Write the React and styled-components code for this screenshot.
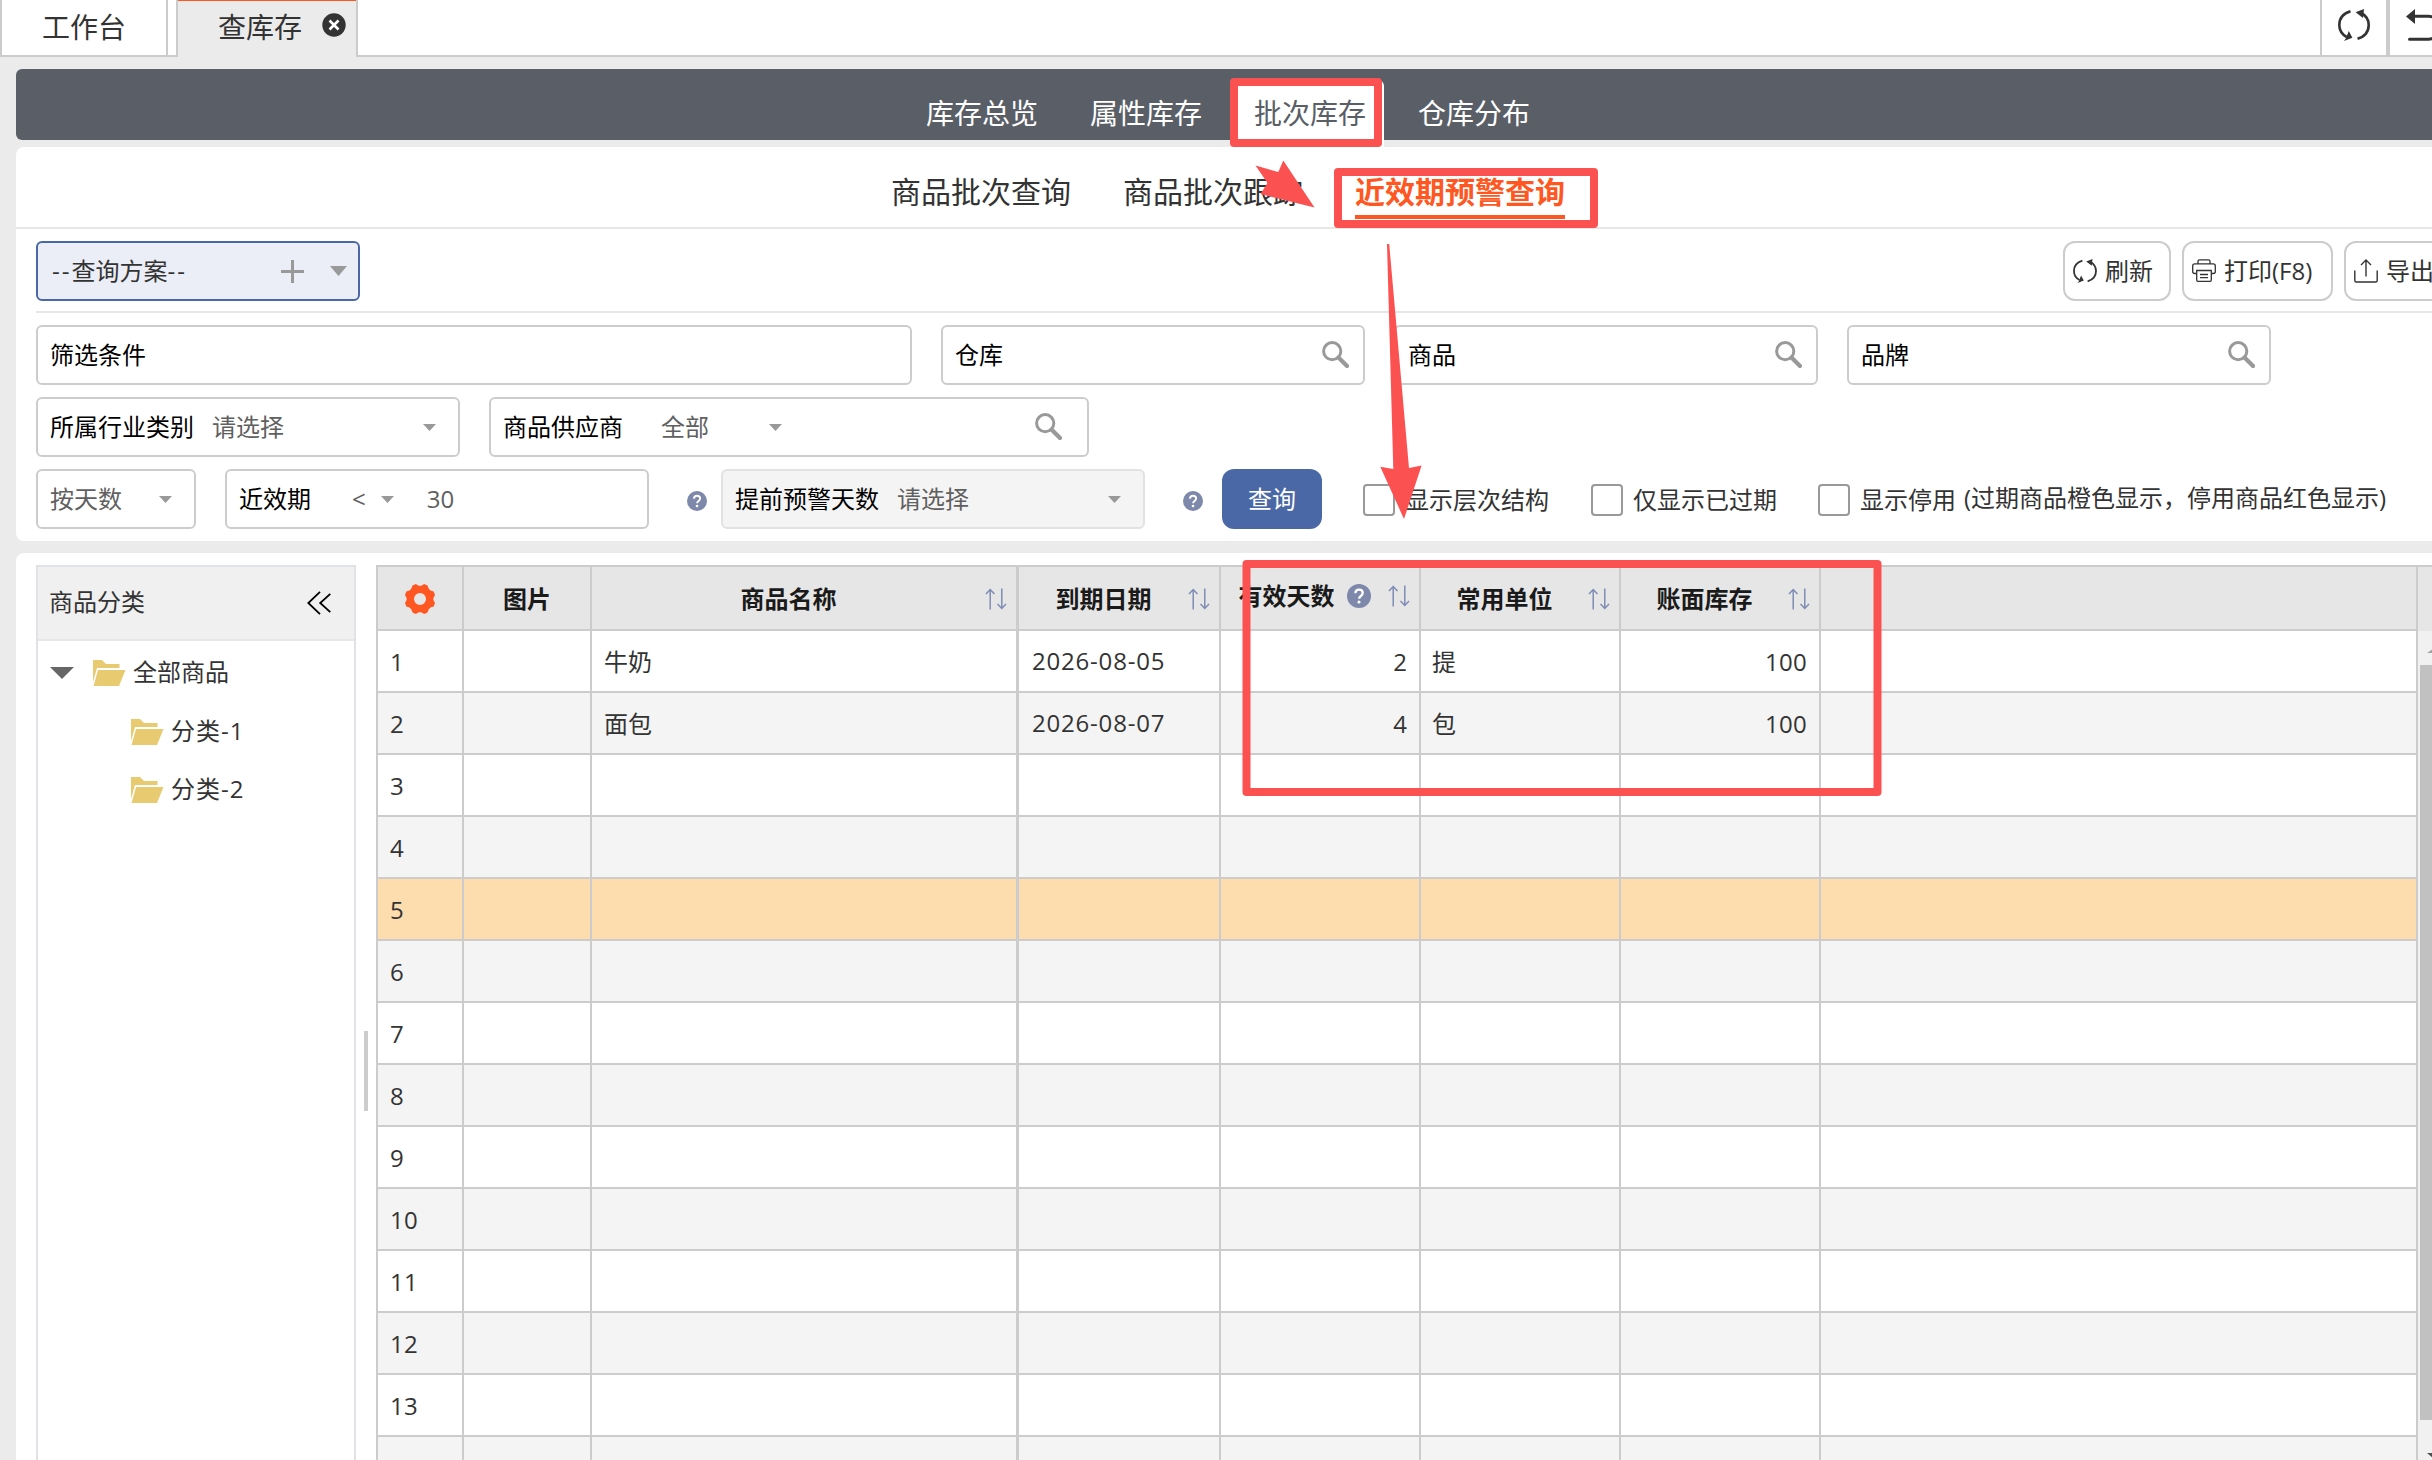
import React from "react";
import styled, { createGlobalStyle, css } from "styled-components";

const LINE = "#cccccc";
const ACCENT = "#ff5722";
const MARK = "#fb5151";

const GlobalStyle = createGlobalStyle`
  *, *::before, *::after { box-sizing: border-box; }
  html, body { margin: 0; padding: 0; }
  body {
    background: #ebebeb;
    color: #333;
    font-family: "Open Sans", "Noto Sans", "Noto Sans CJK SC", sans-serif;
    font-size: 24px;
    line-height: 36px;
    overflow: hidden;
  }
  svg { display: block; flex: none; }
`;

const Page = styled.div`
  position: relative;
  width: 2432px;
  height: 1460px;
  overflow: hidden;
  background: #ebebeb;
`;

/* ---------- window tabs ---------- */
const TabBar = styled.header`
  display: flex;
  height: 57px;
  background: #fff;
  box-shadow: inset 0 -2px 0 ${LINE};
`;

const WindowTab = styled.div`
  display: flex;
  align-items: center;
  width: ${(p) => p.$width}px;
  height: ${(p) => (p.$active ? 57 : 55)}px;
  margin-right: 8px;
  padding: 0 0 ${(p) => (p.$active ? 4 : 2)}px 40px;
  font-size: 28px;
  border: 0 solid ${LINE};
  border-width: 0 2px;
  ${(p) =>
    p.$active &&
    css`
      background: linear-gradient(${ACCENT}, ${ACCENT}) top / 100% 1px no-repeat #ebebeb;
    `}
`;

const CloseIcon = styled.svg`
  margin: 0 0 3px 20px;
`;

const TabTools = styled.div`
  display: flex;
  flex: none;
  height: 55px;
  margin-left: auto;
  margin-right: -24px;
`;

const TabTool = styled.div`
  width: 68px;
  padding: 9px 0 0 16px;
  border: 0 solid ${LINE};
  border-width: 0 2px;
`;

/* ---------- workspace ---------- */
const Workspace = styled.main`
  width: 2488px;
  padding-left: 16px;
`;

const MainNav = styled.nav`
  display: flex;
  align-items: flex-end;
  gap: 16px;
  height: 71px;
  margin-top: 12px;
  padding-left: 892px;
  border-radius: 6px;
  background: #5a5e66;
`;

const MainNavItem = styled.div`
  height: 60px;
  width: 148px;
  padding-top: 15px;
  text-align: center;
  font-size: 28px;
  color: ${(p) => (p.$active ? "#5a5e66" : "#fff")};
  background: ${(p) => (p.$active ? "#fff" : "transparent")};
  border-radius: 6px 6px 0 0;
  box-shadow: ${(p) => (p.$active ? "0 7px 0 #fff" : "none")};
`;

const Panel = styled.section`
  background: #fff;
  border-radius: 8px;
`;

const QueryPanel = styled(Panel)`
  height: 394px;
  margin-top: 7px;
`;

const SubNav = styled.nav`
  display: flex;
  gap: 52px;
  height: 82px;
  padding: 25px 0 0 875px;
  border-bottom: 2px solid #e6e6e6;
`;

const SubNavItem = styled.div`
  height: 47px;
  font-size: 30px;
  line-height: 40px;
  white-space: nowrap;
  ${(p) =>
    p.$active &&
    css`
      color: ${ACCENT};
      font-weight: 700;
      border-bottom: 4px solid ${ACCENT};
    `}
`;

const Toolbar = styled.div`
  display: flex;
  height: 84px;
  margin-left: 20px;
  padding: 12px 16px 0 0;
  border-bottom: 2px solid #e6e6e6;
`;

const SchemePicker = styled.div`
  display: flex;
  align-items: center;
  width: 324px;
  height: 60px;
  padding: 0 11px 0 14px;
  border: 2px solid #4a68a5;
  border-radius: 6px;
  background: #ebeef6;
`;

const SchemeName = styled.span`
  width: 229px;
`;

const Dash = styled.span`
  letter-spacing: 2px;
`;

const ToolButtons = styled.div`
  display: flex;
  gap: 11px;
  margin-left: auto;
`;

const ToolButton = styled.button`
  display: flex;
  align-items: center;
  gap: 8px;
  width: ${(p) => p.$width}px;
  height: 60px;
  padding: 0 0 0 8px;
  border: 2px solid ${LINE};
  border-radius: 12px;
  background: #fff;
  color: #333;
  font: inherit;
  white-space: nowrap;
`;

const Filters = styled.div`
  display: flex;
  flex-direction: column;
  gap: 12px;
  padding: 12px 0 0 20px;
`;

const FilterRow = styled.div`
  display: flex;
  align-items: center;
  height: 60px;
  gap: 29px;
`;

const Field = styled.div`
  display: flex;
  align-items: center;
  flex: none;
  width: ${(p) => p.$width}px;
  height: 60px;
  padding: 0 ${(p) => p.$end || 14}px 0 12px;
  border: 2px solid ${(p) => (p.$disabled ? "#e2e2e2" : LINE)};
  border-radius: 6px;
  background: ${(p) => (p.$disabled ? "#f4f4f4" : "#fff")};
`;

const Label = styled.span`
  color: #000;
  margin-right: ${(p) => p.$gap || 0}px;
`;

const Value = styled.span`
  color: #606060;
  margin-right: ${(p) => p.$gap || 0}px;
`;

const Push = styled.span`
  display: flex;
  margin-left: auto;
  padding-bottom: ${(p) => p.$lift || 0}px;
`;

const Hint = styled.div`
  display: flex;
  align-items: center;
  width: ${(p) => p.$width}px;
  padding: 4px 0 0 ${(p) => p.$pad}px;
`;

const RangeRow = styled(FilterRow)`
  gap: 0;
`;

const Spacer = styled.div`
  flex: none;
  width: ${(p) => p.$width}px;
`;

const QueryButton = styled.button`
  width: 100px;
  height: 60px;
  padding: 0;
  border: 0;
  border-radius: 12px;
  background: #4a68a5;
  color: #fff;
  font: inherit;
`;

const Check = styled.label`
  display: flex;
  align-items: center;
  gap: 10px;
  width: ${(p) => p.$width}px;
  margin-top: 2px;
  white-space: nowrap;
`;

const Box = styled.i`
  flex: none;
  width: 32px;
  height: 32px;
  border: 2px solid #999;
  border-radius: 4px;
  background: #fff;
`;

const Note = styled.span`
  margin-top: -3px;
  white-space: nowrap;
`;

/* ---------- results ---------- */
const ResultPanel = styled(Panel)`
  display: flex;
  height: 960px;
  margin-top: 12px;
  padding: 12px 0 0 20px;
`;

const Sidebar = styled.aside`
  flex: none;
  width: 320px;
  border: 2px solid #dfe2e6;
`;

const SidebarHead = styled.div`
  display: flex;
  align-items: center;
  justify-content: space-between;
  height: 74px;
  padding: 0 23px 0 12px;
  background: #f0f0f0;
  border-bottom: 2px solid #e6e6e6;
`;

const TreeRow = styled.div`
  display: flex;
  align-items: center;
  gap: 8px;
  height: 58.5px;
  margin-top: ${(p) => (p.$root ? 3 : 0)}px;
  padding-left: ${(p) => (p.$root ? 12 : 93)}px;
`;

const TreeLabel = styled.span`
  margin: -2px 0 0 -1px;
  letter-spacing: ${(p) => p.$spacing || 0}px;
`;

const TreeCaret = styled.svg`
  margin-right: 11px;
`;

const Splitter = styled.div`
  display: flex;
  flex: none;
  justify-content: center;
  width: 20px;
  padding-top: 466px;
`;

const SplitterHandle = styled.i`
  width: 4px;
  height: 80px;
  background: ${LINE};
`;

const Grid = styled.div`
  flex: none;
  width: 2042px;
  border-left: 2px solid ${LINE};
  border-top: 2px solid ${LINE};
`;

const GridRow = styled.div`
  display: grid;
  grid-template-columns: 86px 128px 427px 202px 200px 200px 200px 597px;
  height: ${(p) => (p.$head ? 64 : 62)}px;
  background: ${(p) => p.$bg};
`;

const Cell = styled.div`
  display: flex;
  align-items: center;
  justify-content: ${(p) => (p.$right ? "flex-end" : "flex-start")};
  padding: ${(p) => p.$drop || 0}px 12px 0 ${(p) => p.$start || 12}px;
  border-right: ${(p) => (p.$wide ? 3 : 2)}px solid ${LINE};
  border-bottom: 2px solid ${LINE};
  letter-spacing: ${(p) => p.$spacing || 0}px;
  white-space: nowrap;
  overflow: hidden;
`;

const HeadCell = styled.div`
  display: flex;
  align-items: center;
  padding: ${(p) => (p.$lift ? 0 : 2)}px ${(p) => (p.$sort ? 9 : 0)}px ${(p) => p.$lift || 0}px 0;
  border-right: ${(p) => (p.$wide ? 3 : 2)}px solid ${LINE};
  border-bottom: 2px solid ${LINE};
  color: #1a1a1a;
  font-weight: 700;
  white-space: nowrap;
`;

const HeadText = styled.span`
  display: flex;
  flex: 1;
  align-items: center;
  justify-content: center;
  gap: 12px;
`;

const ScrollTrack = styled.div`
  flex: none;
  width: 30px;
  border-top: 2px solid ${LINE};
  background: #f1f1f1;
`;

const ScrollHead = styled.div`
  height: 64px;
  background: #e6e6e6;
`;

const ScrollArrow = styled.svg`
  margin: ${(p) => p.$top}px 0 ${(p) => p.$bottom}px 9px;
`;

const ScrollThumb = styled.div`
  width: 30px;
  height: 755px;
  margin-left: 2px;
  background: #c1c1c1;
`;

/* ---------- annotations over the page ---------- */
const Annotations = styled.svg`
  position: absolute;
  left: 0;
  top: 0;
  pointer-events: none;
`;

/* ---------- icons ---------- */
const Refresh = ({ size, stroke }) => (
  <svg width={size} height={size} viewBox="0 0 32 32" fill="none">
    <path d="M12.5 2.2C5 4.5 1.3 10 1.3 16c0 5 3 9.6 7.4 12" stroke="#333" strokeWidth={stroke} />
    <path d="M19.5 29.8C27 27.5 30.7 22 30.7 16c0-5-3-9.6-7.4-12" stroke="#333" strokeWidth={stroke} />
    <path d="M17.6 3.2 26 0l-1 9z" fill="#333" />
    <path d="M14.4 28.8 6 32l1.8-2.5L10.8 22z" fill="#333" />
  </svg>
);

const Undo = () => (
  <svg width="40" height="34" viewBox="0 0 40 34" fill="none">
    <path d="M8 7.2h14.500a11.500 11.500 0 0 1 0 23H3.500" stroke="#333" strokeWidth="3" strokeLinecap="round" />
    <path d="M0 7.500 9 0v15z" fill="#333" />
  </svg>
);

const Printer = () => (
  <svg width="24" height="24" viewBox="0 0 24 24" fill="none" stroke="#333" strokeWidth="1.3">
    <path d="M6 5V2.200C6 1.300 6.500.8 7.400.8h9.200c.9 0 1.400.5 1.400 1.400V5" />
    <path d="M4.500 14.500H2.800c-1.400 0-2.100-.7-2.100-2.100V7c0-1.400.7-2.100 2.100-2.100h18.400c1.400 0 2.100.7 2.100 2.100v5.400c0 1.400-.7 2.100-2.100 2.100h-1.700" />
    <path d="M4.700 11.500h14.600v9.500c0 .9-.4 1.300-1.300 1.300H6c-.9 0-1.300-.4-1.300-1.300z" />
    <path d="M8 15.500h8M8 18.700h8" />
  </svg>
);

const Export = () => (
  <svg width="24" height="24" viewBox="0 0 24 24" fill="none" stroke="#333" strokeWidth="1.400">
    <path d="M.8 11.500v10c0 1 .5 1.500 1.500 1.500h19.400c1 0 1.500-.5 1.500-1.500v-10M12 17.500V1.200M7 6l5-5 5 5" />
  </svg>
);

const Search = () => (
  <svg width="27" height="27" viewBox="0 0 27 27" fill="none" stroke="#999">
    <circle cx="10.200" cy="10.200" r="8.600" strokeWidth="3" />
    <path d="m16.500 16.500 8.500 8.500" strokeWidth="4.200" strokeLinecap="round" />
  </svg>
);

const Caret = ({ w = 13, h = 7 }) => (
  <svg width={w} height={h} viewBox="0 0 13 7" preserveAspectRatio="none">
    <path d="M0 0h13L6.500 7z" fill="#999" />
  </svg>
);

const Plus = () => (
  <svg width="23" height="23" viewBox="0 0 23 23">
    <path d="M11.500 0v23M0 11.500h23" stroke="#999" strokeWidth="3" />
  </svg>
);

const Help = ({ size = 20 }) => (
  <svg width={size} height={size} viewBox="0 0 20 20" fill="none">
    <circle cx="10" cy="10" r="10" fill="#7d88ab" />
    <path d="M7 7.800C7 5.800 8.300 4.700 10 4.700s3.100 1 3.100 2.700c0 1.300-.7 1.900-1.600 2.600-.9.700-1.400 1.100-1.400 2.300" stroke="#fff" strokeWidth="1.900" />
    <circle cx="10" cy="15" r="1.300" fill="#fff" />
  </svg>
);

const Folder = () => (
  <svg width="33" height="26" viewBox="0 0 33 26" fill="#e8cb70">
    <path d="M0 0h9l4 4h13.500v4H4L0 22z" />
    <path d="M5 10h27.500L26 26H.5z" />
  </svg>
);

const Gear = () => (
  <svg width="30" height="30" viewBox="0 0 30 30">
    <path
      fill={ACCENT}
      fillRule="evenodd"
      d="M7.500 1.500 10.800 0l3 1.800h2.400L19.200 0l3.300 1.500 1.300 3.300 1.700 1.700 3.200 1.100L30 11l-1.600 3v2L30 19l-1.300 3.400-3.200 1.100-1.700 1.700-1.300 3.300-3.300 1.500-3-1.800h-2.400l-3 1.800-3.300-1.500-1.300-3.300-1.700-1.700-3.200-1.100L0 19l1.600-3v-2L0 11l1.300-3.400 3.200-1.100 1.700-1.700zM15 9a6 6 0 1 0 0 12 6 6 0 0 0 0-12z"
    />
  </svg>
);

const Sort = () => (
  <svg width="22" height="22" viewBox="0 0 22 22" fill="none" stroke="#7f8cb5" strokeWidth="1.500">
    <path d="M5.200 21.500V2M1 6l4.200-4.500L9.500 6M16.800.5V20M12.500 16l4.300 4.500L21 16" />
  </svg>
);

const Collapse = () => (
  <svg width="24" height="24" viewBox="0 0 24 24" fill="none" stroke="#000" strokeWidth="1.800">
    <path d="M13 .8 1.300 12 13 23.200M23.300 2.800 13.200 12l10.100 9.200" />
  </svg>
);

/* ---------- data ---------- */
const columns = [
  { title: "图片" },
  { title: "商品名称", sort: true, wide: true },
  { title: "到期日期", sort: true },
  { title: "有效天数", sort: true, help: true },
  { title: "常用单位", sort: true },
  { title: "账面库存", sort: true },
  { title: "" },
];

const records = {
  1: ["牛奶", "2026-08-05", "2", "提", "100"],
  2: ["面包", "2026-08-07", "4", "包", "100"],
};

const rowColor = (n) => (n === 5 ? "#fddcae" : n % 2 ? "#fff" : "#f4f4f4");

const DataRow = ({ n }) => {
  const [name, date, days, unit, stock] = records[n] || [];
  return (
    <GridRow $bg={rowColor(n)}>
      <Cell $drop={2} $spacing={0.3}>{n}</Cell>
      <Cell />
      <Cell $wide $drop={2}>{name}</Cell>
      <Cell $start={13} $spacing={0.8}>{date}</Cell>
      <Cell $right $drop={1}>{days}</Cell>
      <Cell $start={11} $drop={2}>{unit}</Cell>
      <Cell $right $drop={2} $spacing={0.3}>{stock}</Cell>
      <Cell />
    </GridRow>
  );
};

const Lookup = ({ label }) => (
  <Field $width={424}>
    <Label>{label}</Label>
    <Push $lift={2}><Search /></Push>
  </Field>
);

export default function App() {
  return (
    <>
      <GlobalStyle />
      <Page>
        <TabBar>
          <WindowTab $width={168}>工作台</WindowTab>
          <WindowTab $width={182} $active>
            查库存
            <CloseIcon width="24" height="24" viewBox="0 0 24 24">
              <circle cx="12" cy="12" r="11.700" fill="#333" />
              <path d="m7.500 7.500 9 9m0-9-9 9" stroke="#fff" strokeWidth="2.600" />
            </CloseIcon>
          </WindowTab>
          <TabTools>
            <TabTool><Refresh size={32} stroke={2.6} /></TabTool>
            <TabTool><Undo /></TabTool>
          </TabTools>
        </TabBar>

        <Workspace>
          <MainNav>
            <MainNavItem>库存总览</MainNavItem>
            <MainNavItem>属性库存</MainNavItem>
            <MainNavItem $active>批次库存</MainNavItem>
            <MainNavItem>仓库分布</MainNavItem>
          </MainNav>

          <QueryPanel>
            <SubNav>
              <SubNavItem>商品批次查询</SubNavItem>
              <SubNavItem>商品批次跟踪</SubNavItem>
              <SubNavItem $active>近效期预警查询</SubNavItem>
            </SubNav>

            <Toolbar>
              <SchemePicker>
                <SchemeName><Dash>--</Dash>查询方案<Dash>--</Dash></SchemeName>
                <Plus />
                <Push><Caret w={17} h={10} /></Push>
              </SchemePicker>
              <ToolButtons>
                <ToolButton $width={108}><Refresh size={24} stroke={2.4} />刷新</ToolButton>
                <ToolButton $width={151}><Printer />打印(F8)</ToolButton>
                <ToolButton $width={128}><Export />导出</ToolButton>
              </ToolButtons>
            </Toolbar>

            <Filters>
              <FilterRow>
                <Field $width={876}><Label>筛选条件</Label></Field>
                <Lookup label="仓库" />
                <Lookup label="商品" />
                <Lookup label="品牌" />
              </FilterRow>
              <FilterRow>
                <Field $width={424} $end={22}>
                  <Label $gap={18}>所属行业类别</Label>
                  <Value>请选择</Value>
                  <Push><Caret /></Push>
                </Field>
                <Field $width={600} $end={25}>
                  <Label $gap={38}>商品供应商</Label>
                  <Value $gap={60}>全部</Value>
                  <Caret />
                  <Push $lift={1}><Search /></Push>
                </Field>
              </FilterRow>
              <RangeRow>
                <Field $width={160} $end={22}>
                  <Value>按天数</Value>
                  <Push><Caret /></Push>
                </Field>
                <Spacer $width={29} />
                <Field $width={424}>
                  <Label $gap={41}>近效期</Label>
                  <Value $gap={15}>&lt;</Value>
                  <Caret />
                  <Spacer $width={33} />
                  <Value>30</Value>
                </Field>
                <Hint $width={72} $pad={38}><Help /></Hint>
                <Field $width={424} $end={22} $disabled>
                  <Label $gap={18}>提前预警天数</Label>
                  <Value>请选择</Value>
                  <Push><Caret /></Push>
                </Field>
                <Hint $width={77} $pad={38}><Help /></Hint>
                <QueryButton>查询</QueryButton>
                <Spacer $width={41} />
                <Check $width={228}><Box />显示层次结构</Check>
                <Check $width={227}><Box />仅显示已过期</Check>
                <Check $width={146}><Box />显示停用</Check>
                <Note>(过期商品橙色显示，停用商品红色显示)</Note>
              </RangeRow>
            </Filters>
          </QueryPanel>

          <ResultPanel>
            <Sidebar>
              <SidebarHead>
                <TreeLabel>商品分类</TreeLabel>
                <Collapse />
              </SidebarHead>
              <TreeRow $root>
                <TreeCaret width="24" height="12" viewBox="0 0 24 12">
                  <path d="M0 0h24L12 12z" fill="#666" />
                </TreeCaret>
                <Folder />
                <TreeLabel>全部商品</TreeLabel>
              </TreeRow>
              <TreeRow><Folder /><TreeLabel $spacing={1}>分类-1</TreeLabel></TreeRow>
              <TreeRow><Folder /><TreeLabel $spacing={1}>分类-2</TreeLabel></TreeRow>
            </Sidebar>

            <Splitter><SplitterHandle /></Splitter>

            <Grid>
              <GridRow $head $bg="#e6e6e6">
                <HeadCell><HeadText><Gear /></HeadText></HeadCell>
                {columns.map((c) => (
                  <HeadCell key={c.title} $sort={c.sort} $wide={c.wide} $lift={c.help ? 4 : 0}>
                    <HeadText>{c.title}{c.help && <Help size={24} />}</HeadText>
                    {c.sort && <Sort />}
                  </HeadCell>
                ))}
              </GridRow>
              {Array.from({ length: 14 }, (_, i) => <DataRow key={i} n={i + 1} />)}
            </Grid>

            <ScrollTrack>
              <ScrollHead />
              <ScrollArrow $top={17} $bottom={12} width="14" height="5" viewBox="0 0 14 5">
                <path d="M0 5 7 0l7 5z" fill="#a3a3a3" />
              </ScrollArrow>
              <ScrollThumb />
              <ScrollArrow $top={33} $bottom={0} width="14" height="6" viewBox="0 0 14 6">
                <path d="M0 0h14L7 6z" fill="#505050" />
              </ScrollArrow>
            </ScrollTrack>
          </ResultPanel>
        </Workspace>

        <Annotations width="2432" height="1460" viewBox="0 0 2432 1460">
          <g fill="none" stroke={MARK} strokeWidth="8" strokeLinejoin="round">
            <rect x="1234" y="82" width="144" height="61" />
            <rect x="1338" y="172" width="256" height="52" />
            <rect x="1246.500" y="564" width="631" height="228" />
          </g>
          <g fill={MARK}>
            <path d="M1255.500 165.500 1278.300 172 1283.300 160.500 1314.500 207.500 1260.500 194 1267.500 183z" />
            <path d="M1387 244h2.200L1409 468l12.600-2.500L1404 519l-23.700-52.200 13 2.200z" />
          </g>
        </Annotations>
      </Page>
    </>
  );
}
